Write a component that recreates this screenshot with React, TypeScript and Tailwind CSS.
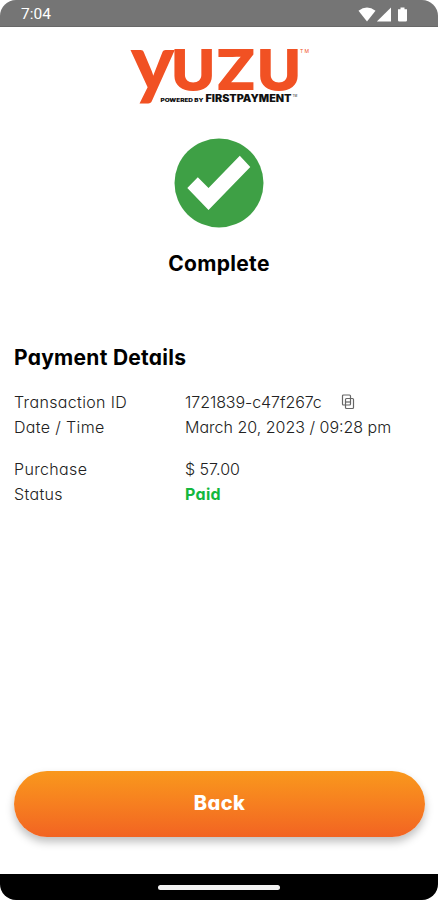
import { useState } from "react";

interface DetailRowProps {
  label: string;
  children: React.ReactNode;
}

const StatusBar: React.FC = () => (
  <div className="flex h-[27px] items-center justify-between border-b border-[#686868] bg-[#757575] pl-[21px] pr-[29px] pt-0.5">
    <span className="pt-0.5 font-[Roboto,sans-serif] text-[15.5px] leading-none text-white">7:04</span>
    <svg width="51" height="15" viewBox="0 0 51 15" fill="#fff" aria-hidden="true">
      <path d="M0.5 3.7Q9 -2.5 17.5 3.7L9 14.5Z" />
      <path d="M33 0.5V14.5H18.8Z" />
      <path d="M40 2.3h2.5V0.5h4v1.8H49v11a1.2 1.2 0 0 1-1.2 1.2h-6.6a1.2 1.2 0 0 1-1.2-1.2Z" />
    </svg>
  </div>
);

const Logo: React.FC = () => (
  <svg
    width="182"
    height="58"
    viewBox="130 47 182 58"
    className="overflow-visible font-[Inter,sans-serif]"
  >
    <g fill="#f15123">
      <text x="130.5" y="89.5" fontSize="79" className="font-[Lato,sans-serif] font-black" textLength="44" lengthAdjust="spacingAndGlyphs">
        y
      </text>
      <text x="171" y="89.5" fontSize="56" fontWeight="800" textLength="130" lengthAdjust="spacingAndGlyphs">
        UZU
      </text>
      <text x="300" y="53" fontSize="5" textLength="9">TM</text>
    </g>
    <g fill="#111">
      <text x="160.5" y="101.5" fontSize="4.8" fontWeight="900" textLength="43" lengthAdjust="spacingAndGlyphs">
        POWERED BY
      </text>
      <text x="205.5" y="101.5" fontSize="9.8" fontWeight="900" textLength="86" lengthAdjust="spacingAndGlyphs">
        FIRSTPAYMENT
      </text>
      <text x="292.5" y="97" fontSize="3">TM</text>
    </g>
  </svg>
);

const CheckBadge: React.FC = () => (
  <svg width="90" height="90" viewBox="0 0 90 90" aria-hidden="true">
    <circle cx="45" cy="45" r="44.5" fill="#3ea045" />
    <path d="M13.3 50L23.8 39.3L34.5 50L65.8 17.8L76.3 29L34.5 72Z" fill="#fff" />
  </svg>
);

const CopyIcon: React.FC = () => (
  <svg width="14" height="16" viewBox="0 0 14 16" fill="none" stroke="#666" strokeWidth="1.2" aria-hidden="true">
    <rect x="1.5" y="1" width="8" height="10" rx="1" />
    <rect x="4.5" y="4.5" width="8" height="10" rx="1" />
    <path d="M4.5 8H9.5" />
  </svg>
);

const DetailRow: React.FC<DetailRowProps> = ({ label, children }) => (
  <div className="flex h-[25px] items-center">
    <dt className="w-[171px] shrink-0 tracking-[0.35px]">{label}</dt>
    <dd className="flex items-center whitespace-nowrap">{children}</dd>
  </div>
);

export default function App() {
  const [copied, setCopied] = useState(false);
  const transactionId = "1721839-c47f267c";

  const handleCopy = () => {
    navigator.clipboard?.writeText(transactionId);
    setCopied(true);
  };

  return (
    <div className="h-[900px] w-[438px] bg-white">
      <div className="flex h-full flex-col overflow-hidden rounded-[16px] bg-white font-[Inter,sans-serif] text-black [font-feature-settings:'cv11']">
        <StatusBar />
        <main className="flex flex-1 flex-col px-3.5">
          <header className="ml-[116px] mt-5">
            <Logo />
          </header>
          <section className="mt-[33px] flex flex-col items-center">
            <CheckBadge />
            <h1 className="mt-[22px] text-[21px] font-bold leading-[28px] tracking-[0.3px]">Complete</h1>
          </section>

          <section className="mt-[66px]">
            <h2 className="text-[21px] font-bold leading-[28px] tracking-[0.27px]">Payment Details</h2>
            <dl className="mt-[17px] text-[16px] font-light text-[#222]">
              <DetailRow label="Transaction ID">
                <span className="tracking-[-0.06px]">{transactionId}</span>
                <button onClick={handleCopy} className="ml-[19px]" aria-label={copied ? "Copied" : "Copy"}>
                  <CopyIcon />
                </button>
              </DetailRow>
              <DetailRow label="Date / Time">March 20, 2023 / 09:28 pm</DetailRow>
              <div className="h-[17px]" />
              <DetailRow label="Purchase">$ 57.00</DetailRow>
              <DetailRow label="Status">
                <span className="font-bold tracking-[0.3px] text-[#14b83e]">Paid</span>
              </DetailRow>
            </dl>
          </section>

          <button className="mb-[37px] mt-auto h-[66px] w-[411px] rounded-full bg-linear-to-b from-[#f9981c] to-[#f26322] pb-0.5 text-[20px] font-extrabold tracking-[0.4px] text-white shadow-[0_5px_8px_rgba(0,0,0,0.25)]">
            Back
          </button>
        </main>
        <footer className="flex h-[26px] items-center justify-center bg-black">
          <div className="h-[5px] w-[122px] rounded-full bg-[#f2f2f2]" />
        </footer>
      </div>
    </div>
  );
}
